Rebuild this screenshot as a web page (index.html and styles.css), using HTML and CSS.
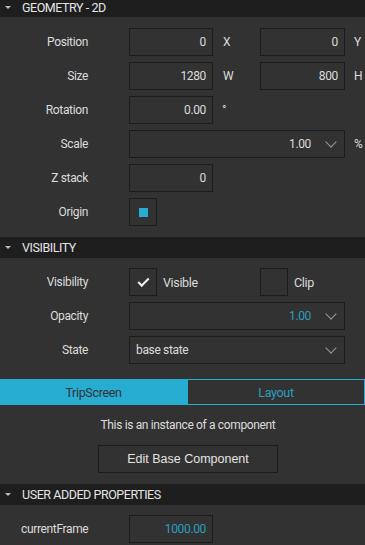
FILE: index.html
```html
<!doctype html>
<html>
    <head>
        <meta charset="utf-8">
        <title>Properties</title>
        <meta name="viewport" content="width=device-width, initial-scale=1">
        <link rel="stylesheet" href="styles.css">
    </head>
    <body>
        <div class="panel">
            <section class="section geometry">
                <div class="section-head"><span class="arrow"></span>GEOMETRY - 2D</div>
                <div class="rows">
                    <div class="row">
                        <span class="label">Position</span>
                        <div class="field">0</div>
                        <span class="unit">X</span>
                        <div class="field">0</div>
                        <span class="unit">Y</span>
                    </div>
                    <div class="row">
                        <span class="label">Size</span>
                        <div class="field">1280</div>
                        <span class="unit">W</span>
                        <div class="field">800</div>
                        <span class="unit">H</span>
                    </div>
                    <div class="row">
                        <span class="label">Rotation</span>
                        <div class="field">0.00</div>
                        <span class="unit">°</span>
                    </div>
                    <div class="row">
                        <span class="label">Scale</span>
                        <div class="field combo wide"><span>1.00</span><span class="chevron"></span></div>
                        <span class="unit">%</span>
                    </div>
                    <div class="row">
                        <span class="label">Z stack</span>
                        <div class="field">0</div>
                    </div>
                    <div class="row">
                        <span class="label">Origin</span>
                        <div class="origin"><span class="dot"></span></div>
                    </div>
                </div>
            </section>

            <section class="section visibility">
                <div class="section-head"><span class="arrow"></span>VISIBILITY</div>
                <div class="rows">
                    <div class="row checks">
                        <span class="label">Visibility</span>
                        <div class="check checked"></div>
                        <span class="check-text">Visible</span>
                        <div class="check"></div>
                        <span class="check-text">Clip</span>
                    </div>
                    <div class="row">
                        <span class="label">Opacity</span>
                        <div class="field combo wide"><span class="blue">1.00</span><span class="chevron"></span></div>
                    </div>
                    <div class="row">
                        <span class="label">State</span>
                        <div class="field combo wide left"><span>base state</span><span class="chevron"></span></div>
                    </div>
                </div>
            </section>

            <div class="tabs">
                <div class="tab active">TripScreen</div>
                <div class="tab">Layout</div>
            </div>

            <div class="component">
                <p>This is an instance of a component</p>
                <button class="btn">Edit Base Component</button>
            </div>

            <section class="section user">
                <div class="section-head"><span class="arrow"></span>USER ADDED PROPERTIES</div>
                <div class="rows">
                    <div class="row">
                        <span class="label left">currentFrame</span>
                        <div class="field blue">1000.00</div>
                    </div>
                </div>
            </section>
        </div>
    </body>
</html>
```

FILE: styles.css
```css
html,
body {
    margin: 0;
    height: 100%;
    background: #323232;
    overflow: hidden;
}

body {
    font-family: Roboto, sans-serif;
    font-size: 12px;
    letter-spacing: -0.35px;
    color: #dcdcdc;
}

.section-head {
    height: 21px;
    display: flex;
    align-items: center;
    background: #1e1e1e;
    color: #e4e4e4;
    font-size: 12.5px;
    letter-spacing: -0.45px;
}
.geometry .section-head {
    height: 17px;
    box-sizing: border-box;
    padding-bottom: 3px;
}
.arrow {
    width: 0;
    height: 0;
    margin: 0 11px 0 5px;
    border-left: 3px solid transparent;
    border-right: 3px solid transparent;
    border-top: 3px solid #bcbcbc;
}

.rows {
    display: flex;
    flex-direction: column;
    gap: 6px;
}
.geometry .rows {
    padding: 11px 0;
}
.visibility .rows {
    padding: 10px 0 15px;
}
.user .rows {
    padding: 10px 0 0;
}

.row {
    display: grid;
    grid-template-columns: 129px 84px 47px 85px 20px;
    height: 28px;
    align-items: center;
}
.row.checks {
    grid-template-columns: 129px 28px 103px 28px 1fr;
}
.label {
    text-align: right;
    padding-right: 41px;
}
.label.left {
    text-align: left;
    padding: 0 0 0 21px;
}

.field {
    box-sizing: border-box;
    height: 28px;
    border: 1px solid #1c1c1c;
    display: flex;
    align-items: center;
    justify-content: flex-end;
    padding-right: 6px;
}
.field.wide {
    grid-column: span 3;
}
.combo {
    padding-right: 9px;
}
.combo.left {
    justify-content: space-between;
    padding-left: 6px;
}
.chevron {
    width: 7px;
    height: 7px;
    margin: -5px 0 0 16px;
    border-right: 1px solid #9a9a9a;
    border-bottom: 1px solid #9a9a9a;
    transform: rotate(45deg);
}
.blue {
    color: #2a9fc0;
}

.unit {
    padding-left: 10px;
}
.unit:last-child {
    padding-left: 9px;
}

.origin,
.check {
    box-sizing: border-box;
    width: 28px;
    height: 28px;
    border: 1px solid #1c1c1c;
    display: flex;
    align-items: center;
    justify-content: center;
}
.dot {
    width: 9px;
    height: 9px;
    background: #27acd2;
}
.check.checked::after {
    content: "";
    width: 9px;
    height: 4px;
    margin-top: -3px;
    border-left: 2px solid #f0f0f0;
    border-bottom: 2px solid #f0f0f0;
    transform: rotate(-45deg);
}
.check-text {
    padding-left: 6px;
    font-size: 12.5px;
}

.tabs {
    display: flex;
    height: 26px;
}
.tab {
    flex: 1;
    display: flex;
    align-items: center;
    justify-content: center;
    box-sizing: border-box;
    border: 1px solid #27acd2;
    border-left: none;
    color: #2a9fc0;
    font-size: 12.5px;
}
.tab.active {
    flex: 0 0 188px;
    background: #27acd2;
    color: #333;
}

.component {
    padding: 12px 0 11px 11px;
    display: flex;
    flex-direction: column;
    align-items: center;
}
.component p {
    margin: 0 0 12px;
    line-height: 16px;
}
.btn {
    width: 180px;
    height: 28px;
    background: transparent;
    border: 1px solid #1c1c1c;
    color: #e4e4e4;
    font-family: "Liberation Sans", sans-serif;
    font-size: 12.5px;
    letter-spacing: 0;
}
```
